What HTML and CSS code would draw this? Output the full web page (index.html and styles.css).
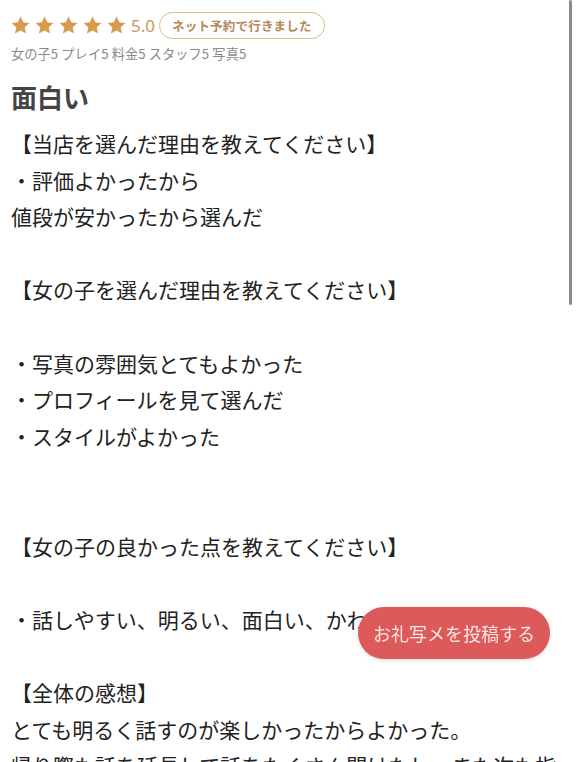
FILE: index.html
```html
<!DOCTYPE html>
<html lang="ja">
<head>
<meta charset="utf-8">
<link rel="stylesheet" href="styles.css">
</head>
<body>
<div class="page">
  <div class="rating">
    <div class="stars">
      <svg class="star" viewBox="0 0 24 24"><path d="M12 1.8l3 6.6 7.2.8-5.4 4.9 1.5 7.1L12 17.6l-6.3 3.6 1.5-7.1L1.8 9.2 9 8.4z"/></svg>
      <svg class="star" viewBox="0 0 24 24"><path d="M12 1.8l3 6.6 7.2.8-5.4 4.9 1.5 7.1L12 17.6l-6.3 3.6 1.5-7.1L1.8 9.2 9 8.4z"/></svg>
      <svg class="star" viewBox="0 0 24 24"><path d="M12 1.8l3 6.6 7.2.8-5.4 4.9 1.5 7.1L12 17.6l-6.3 3.6 1.5-7.1L1.8 9.2 9 8.4z"/></svg>
      <svg class="star" viewBox="0 0 24 24"><path d="M12 1.8l3 6.6 7.2.8-5.4 4.9 1.5 7.1L12 17.6l-6.3 3.6 1.5-7.1L1.8 9.2 9 8.4z"/></svg>
      <svg class="star" viewBox="0 0 24 24"><path d="M12 1.8l3 6.6 7.2.8-5.4 4.9 1.5 7.1L12 17.6l-6.3 3.6 1.5-7.1L1.8 9.2 9 8.4z"/></svg>
    </div>
    <span class="score">5.0</span>
    <span class="badge">ネット予約で行きました</span>
  </div>
  <div class="sub">女の子5 プレイ5 料金5 スタッフ5 写真5</div>
  <h1 class="title">面白い</h1>
  <div class="body">
    <p>【当店を選んだ理由を教えてください】</p>
    <p>・評価よかったから</p>
    <p>値段が安かったから選んだ</p>
    <p>&nbsp;</p>
    <p>【女の子を選んだ理由を教えてください】</p>
    <p>&nbsp;</p>
    <p>・写真の雰囲気とてもよかった</p>
    <p>・プロフィールを見て選んだ</p>
    <p>・スタイルがよかった</p>
    <p>&nbsp;</p>
    <p>&nbsp;</p>
    <p>【女の子の良かった点を教えてください】</p>
    <p>&nbsp;</p>
    <p>・話しやすい、明るい、面白い、かわいい</p>
    <p>&nbsp;</p>
    <p>【全体の感想】</p>
    <p>とても明るく話すのが楽しかったからよかった。</p>
    <p class="wrap">帰り際も話を延長して話をたくさん聞けたし、また次も指名したい。</p>
  </div>
</div>
<button class="post">お礼写メを投稿する</button>
<div class="scrollbar"></div>
</body>
</html>
```
FILE: styles.css
```css
html, body {
  margin: 0;
  padding: 0;
  background: #ffffff;
  overflow: hidden;
}
body {
  width: 576px;
  height: 762px;
  font-family: "Noto Sans CJK JP", "Noto Sans", sans-serif;
  color: #222222;
}
.page {
  padding: 11px 12px 0 11px;
}
.rating {
  display: flex;
  align-items: center;
  height: 29px;
}
.stars {
  display: flex;
  gap: 3px;
  margin-left: -1px;
}
.star {
  width: 21px;
  height: 21px;
  fill: #d99a4e;
}
.score {
  margin-left: 4px;
  font-family: "Noto Sans", sans-serif;
  font-size: 17px;
  color: #c8975c;
  line-height: 1;
}
.badge {
  margin-left: 4px;
  height: 25px;
  padding: 0 12px;
  display: flex;
  align-items: center;
  border: 1.5px solid #d9b98e;
  border-radius: 14px;
  font-size: 12.5px;
  font-weight: 700;
  color: #b48a5a;
  letter-spacing: 0.2px;
}
.sub {
  margin-top: 4px;
  font-size: 13.2px;
  color: #8a8a8a;
  line-height: 20px;
  letter-spacing: 0.1px;
}
.title {
  margin: 15px 0 0 0;
  font-size: 26px;
  font-weight: 700;
  color: #444444;
  line-height: 36px;
}
.body {
  margin-top: 10px;
  font-size: 21px;
  line-height: 36.6px;
  color: #222222;
}
.body p {
  margin: 0;
  white-space: nowrap;
}
.body p.wrap {
  white-space: normal;
}
.post {
  position: fixed;
  left: 358px;
  top: 607px;
  width: 192px;
  height: 52px;
  border: none;
  border-radius: 26px;
  background: #dd5a5a;
  color: #fbe6e6;
  font-family: "Noto Sans CJK JP", sans-serif;
  font-size: 18px;
  box-shadow: 0 1px 4px rgba(0,0,0,0.15);
  padding: 0;
}
.scrollbar {
  position: fixed;
  left: 569px;
  top: 0;
  width: 3px;
  height: 305px;
  border-radius: 2px;
  background: #8c8c8c;
}
```
